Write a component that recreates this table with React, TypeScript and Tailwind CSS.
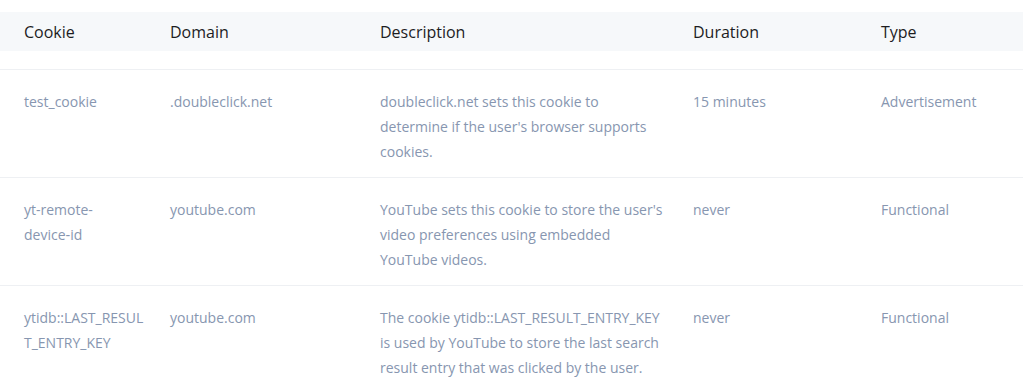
const rows = [
  {
    cookie: 'test_cookie',
    domain: '.doubleclick.net',
    description: "doubleclick.net sets this cookie to determine if the user's browser supports cookies.",
    duration: '15 minutes',
    type: 'Advertisement',
  },
  {
    cookie: 'yt-remote-device\u2011id',
    domain: 'youtube.com',
    description: "YouTube sets this cookie to store the user's video preferences using embedded YouTube videos.",
    duration: 'never',
    type: 'Functional',
  },
  {
    cookie: 'ytidb::LAST_RESULT_ENTRY_KEY',
    domain: 'youtube.com',
    description:
      'The cookie ytidb::LAST_RESULT_ENTRY_KEY is used by YouTube to store the last search result entry that was clicked by the user.',
    duration: 'never',
    type: 'Functional',
  },
];

const cols = 'grid grid-cols-[170px_210px_313px_188px_1fr]';

export default function App() {
  return (
    <div className="w-[1023px] h-[390px] overflow-hidden bg-white pt-3 font-['Open_Sans',sans-serif]">
      {/* Header */}
      <div className={`${cols} h-[39px] items-center bg-[#f6f8fa] text-[16px] text-[#1d1d1f]`}>
        <div className="pl-6">Cookie</div>
        <div>Domain</div>
        <div>Description</div>
        <div>Duration</div>
        <div>Type</div>
      </div>

      <div className="h-[19px] border-b border-[#eef0f3]" />

      {rows.map((r) => (
        <div
          key={r.cookie}
          className={`${cols} border-b border-[#eef0f3] pt-[19px] pb-[13px] text-[14px] leading-[25px] text-[#8796b0]`}
        >
          <div className="pl-6 pr-[24px] [overflow-wrap:anywhere]">{r.cookie}</div>
          <div className="pr-4">{r.domain}</div>
          <div className="pr-[30px]">{r.description}</div>
          <div className="pr-4">{r.duration}</div>
          <div className="pr-4">{r.type}</div>
        </div>
      ))}
    </div>
  );
}
